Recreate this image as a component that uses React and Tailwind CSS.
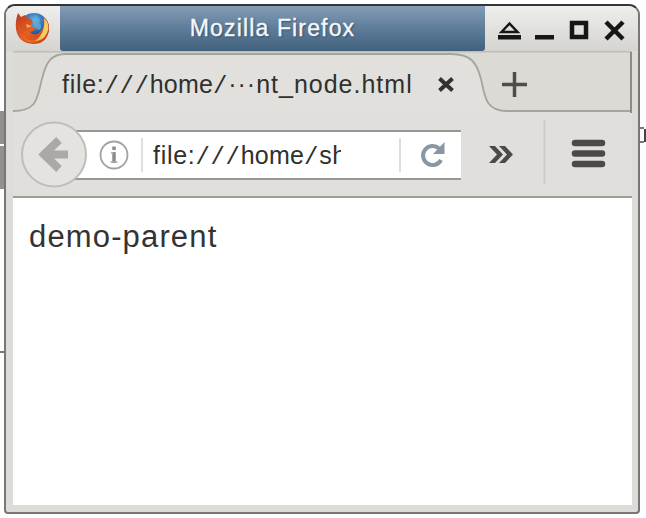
function FirefoxLogo() {
  return (
    <svg width="36" height="36" viewBox="0 0 36 36">
      <defs>
        <radialGradient id="globe" cx="50%" cy="25%" r="70%">
          <stop offset="0" stopColor="#69b6e6" />
          <stop offset="0.5" stopColor="#2869b0" />
          <stop offset="1" stopColor="#183068" />
        </radialGradient>
        <linearGradient id="fox" x1="0" y1="0" x2="1" y2="1">
          <stop offset="0" stopColor="#b83a25" />
          <stop offset="0.5" stopColor="#e65e21" />
          <stop offset="1" stopColor="#c63d16" />
        </linearGradient>
      </defs>
      <circle cx="19" cy="18" r="15" fill="url(#globe)" />
      <path d="M20 5 Q27 8 24 13 Q28 15 25 20 L18 18Z" fill="#5eafe0" opacity=".7" />
      <path d="M28 7 Q35 12 34 20 Q32 34 18 34 Q3 33 1 19 Q0 11 3 3 L6 7 L10 5 Q13 9 17 10 Q19 13 15 16 L22 18 Q19 21 15 22 Q20 27 25 22 Q31 16 28 7Z" fill="url(#fox)" />
      <path d="M29 8 Q36 15 32 23 Q28 31 20 31 Q31 23 29 8Z" fill="#f2cf63" />
      <path d="M4 12 Q3 24 11 29 Q19 33 27 26 Q23 34 14 32 Q4 28 4 12Z" fill="#f28b2c" opacity=".5" />
      <path d="M11 14 L17 16 L12 18Z" fill="#f7a650" />
    </svg>
  );
}

function Slashes({ children }) {
  return <span className="font-['Liberation_Mono',monospace] text-[24px]">{children}</span>;
}

function TitleBar() {
  return (
    <div className="flex h-[45px] shrink-0 bg-gradient-to-b from-[#eeeeec] to-[#d5d4d0]">
      <div className="flex w-[54px] items-center justify-center pb-[2px]">
        <FirefoxLogo />
      </div>
      <div className="flex w-[425px] items-center justify-center rounded-b-[3px] bg-gradient-to-b from-[#859bb5] via-[#5e7d9a] to-[#41617d] text-[23px] tracking-[1.15px] text-[#f4f7fa] [-webkit-text-stroke:0.4px_#f4f7fa] [text-shadow:1px_1px_2px_#30465c]">
        <span className="whitespace-nowrap">Mozilla Firefox</span>
      </div>
      <svg className="block" width="153" height="45" viewBox="485 6 153 45" fill="none" stroke="#161616">
        <path d="M501.500 32 L509.500 23.500 L517.500 32Z" strokeWidth="2.500" />
        <path d="M498 37.200H521M535 37.200H554" strokeWidth="4.500" />
        <rect x="572" y="23" width="14" height="14" strokeWidth="4.500" />
        <path d="M606 22 L623 39 M623 22 L606 39" strokeWidth="4.500" />
      </svg>
    </div>
  );
}

function TabBar() {
  return (
    <div className="grid h-[62px] shrink-0">
      <svg className="col-start-1 row-start-1 block" width="619" height="62" viewBox="13 51 619 62">
        <rect x="13" y="51" width="619" height="62" fill="#dbdad5" />
        <path d="M13 113 V111 C39 111 37 96 42 79 C46 62 51 54 66 54 H451 C471 54 477 63 481 79 C485 96 485 111 507 111 H632 V113Z" fill="#e1e0dc" />
        <path d="M13 111 C39 111 37 96 42 79 C46 62 51 54 66 54 H451 C471 54 477 63 481 79 C485 96 485 111 507 111 H632" fill="none" stroke="#a5a4a0" strokeWidth="1.800" />
        <path d="M13 51.800H632" stroke="#bebdb9" strokeWidth="1.500" />
        <path d="M631 52V113" stroke="#918b84" strokeWidth="2" />
        <path d="M439.500 78.500 L452.500 90.500 M452.500 78.500 L439.500 90.500" stroke="#33322f" strokeWidth="4" />
        <path d="M502 84.500H527M514.500 72V97" stroke="#4e4d4a" strokeWidth="3.500" />
      </svg>
      <div className="col-start-1 row-start-1 flex pl-[49px] pt-[15px] text-[25px] leading-[36px] text-[#30302e]">
        <span className="whitespace-nowrap tracking-[0.7px]">
          file:<Slashes>///</Slashes>
          <span className="tracking-[0.2px]">home</span>
          <Slashes>/</Slashes>
          <span className="tracking-[1px]">···nt_node.html</span>
        </span>
      </div>
    </div>
  );
}

function Toolbar() {
  return (
    <div className="flex h-[85px] shrink-0 border-b-2 border-[#a19c92] bg-[#e0dfdb]">
      <svg className="ml-[7px] mt-[8px] block shrink-0" width="68" height="68" viewBox="20 121 68 68">
        <path d="M74 131H88M74 179H88" stroke="#989793" strokeWidth="2" />
        <path d="M74 132H88V178H74Z" fill="#fff" />
        <circle cx="54" cy="154.500" r="32" fill="#e4e3df" stroke="#bebdb9" strokeWidth="2" />
        <path d="M59 140 L44 154.500 L59 169 M44 154.500H68" fill="none" stroke="#aaa9a6" strokeWidth="8" />
      </svg>
      <div className="mt-[17px] flex h-[50px] w-[373px] shrink-0 items-center border-y-2 border-[#989793] bg-white">
        <svg className="ml-[10px] block shrink-0" width="32" height="32" viewBox="98 139 32 32" fill="none" stroke="#a3a29f">
          <circle cx="114" cy="155" r="13.500" strokeWidth="1.800" />
          <path d="M114 152V163M114 146.500V150" stroke="#8c8b88" strokeWidth="3.500" />
          <path d="M111 153H114M110.500 162H117.500" stroke="#aaa9a6" strokeWidth="1.500" />
        </svg>
        <div className="ml-[11px] h-[34px] w-[2px] bg-[#dededc]" />
        <div className="ml-[10px] w-[188px] overflow-hidden whitespace-nowrap pt-[3px] text-[25px] leading-[36px] tracking-[0.7px] text-[#30302e]">
          file:<Slashes>///</Slashes>
          <span className="tracking-[0.2px]">home</span>
          <Slashes>/</Slashes>sh
        </div>
        <div className="ml-[58px] h-[34px] w-[2px] bg-[#dededc]" />
        <svg className="ml-[18px] block" width="28" height="30" viewBox="419 140 28 30">
          <path d="M441 160 A9.500 9.500 0 1 1 439 148.500" fill="none" stroke="#8997a4" strokeWidth="4" />
          <path d="M444.500 142V154H433Z" fill="#8997a4" />
        </svg>
      </div>
      <svg className="block shrink-0" width="171" height="80" viewBox="461 113 171 80" fill="none" stroke="#4b4a48">
        <path d="M489 146H495L503 154.500L495 163H489L497 154.500ZM499 146H505L513 154.500L505 163H499L507 154.500Z" fill="#4b4a48" stroke="none" />
        <path d="M544.500 120V184" stroke="#cecdc9" strokeWidth="2" />
        <path d="M575 143H602M575 153.500H602M575 164H602" strokeWidth="6.500" strokeLinecap="round" />
      </svg>
    </div>
  );
}

function BackgroundDetails() {
  return (
    <>
      <div className="absolute left-0 top-[111px] h-[33px] w-[5px] bg-[#92918f]" />
      <div className="absolute left-0 top-[146px] h-[43px] w-[5px] bg-[#92918f]" />
      <div className="absolute left-0 top-[351px] h-[2px] w-[5px] bg-[#777]" />
      <div className="absolute left-[640px] top-[127px] h-[16px] w-[4px] border-y-2 border-[#777]" />
      <div className="absolute left-[644px] top-[129px] h-[13px] w-[2px] bg-[#444]" />
    </>
  );
}

export default function App() {
  return (
    <div className="relative h-[518px] w-[646px] overflow-hidden bg-white pl-[4px] pt-[4px] font-['Liberation_Sans',sans-serif]">
      <BackgroundDetails />
      <div className="relative flex h-[510px] w-[636px] flex-col overflow-hidden rounded-b-[4px] rounded-t-[11px] border-2 border-t-[#34353b] border-r-[#777773] border-b-[#777773] border-l-[#777773] bg-[#dddcd8]">
        <TitleBar />
        <div className="mb-[7px] ml-[7px] flex w-[619px] flex-1 flex-col">
          <TabBar />
          <Toolbar />
          <main className="flex-1 bg-white pl-[16px] pt-[19px] text-[31px] leading-[40px] text-[#333]">
            <span className="tracking-[1.15px]">demo-parent</span>
          </main>
        </div>
      </div>
    </div>
  );
}
